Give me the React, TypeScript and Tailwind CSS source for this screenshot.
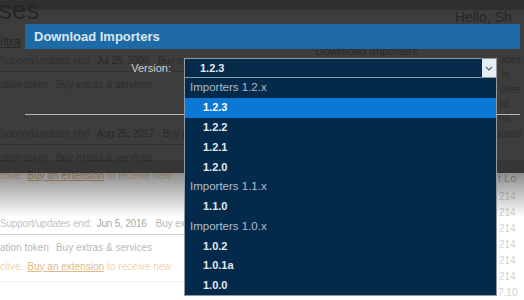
import React from 'react';

type Opt = { label: string; group?: boolean; selected?: boolean };

const OPTIONS: Opt[] = [
  { label: 'Importers 1.2.x', group: true },
  { label: '1.2.3', selected: true },
  { label: '1.2.2' },
  { label: '1.2.1' },
  { label: '1.2.0' },
  { label: 'Importers 1.1.x', group: true },
  { label: '1.1.0' },
  { label: 'Importers 1.0.x', group: true },
  { label: '1.0.2' },
  { label: '1.0.1a' },
  { label: '1.0.0' },
];

function SupportRow({ date, h }: { date: string; h: string }) {
  return (
    <div className={`${h} flex items-center whitespace-nowrap border-b border-[#cfcfcf] tracking-[-0.2px]`}>
      <span className="text-[#c4c4c4]">Support/updates end:</span>
      <span className="ml-[5px] text-[#a9a9a9]">{date}</span>
      <span className="ml-[9px] text-[#b9b9b9]">Buy ext</span>
    </div>
  );
}

function TokenRow({ h }: { h: string }) {
  return (
    <div className={`${h} flex items-center whitespace-nowrap text-[#b9b9b9]`}>
      <span>ation token</span>
      <span className="ml-[7px]">Buy extras &amp; services</span>
    </div>
  );
}

function ExpiredRow() {
  return (
    <div className="h-[12px] flex items-center whitespace-nowrap text-[#f1d6b4]">
      <span>ctive.</span>
      <span className="ml-[4px] text-[#e2b883] underline">Buy an extension</span>
      <span className="ml-[3px]">to receive new</span>
    </div>
  );
}

function Page() {
  return (
    <div className="flex h-[300px] bg-[linear-gradient(to_bottom,#c6c6c6_10px,#ffffff_10px)] text-[10px]">
      {/* main column, its right part lies under the select */}
      <div className="w-[184px] shrink-0 overflow-hidden flex flex-col">
        <div className="h-[24px]">
          <div className="-mt-[3px] -ml-[1px] text-[26px] leading-[26px] text-[#9a9a9a]">ses</div>
        </div>
        <div className="h-[26px] flex items-end pb-[1px]">
          <span className="text-[13px] leading-[14px] text-[#a5a5a5] underline">iltra</span>
        </div>
        <SupportRow date="Jul 25, 2009" h="h-[22px]" />
        <TokenRow h="h-[24px]" />
        <div className="h-[26px]" />
        <SupportRow date="Aug 25, 2017" h="h-[23px]" />
        <TokenRow h="h-[24px]" />
        <ExpiredRow />
        <div className="h-[31px]" />
        <SupportRow date="Jun 5, 2016" h="h-[23px]" />
        <TokenRow h="h-[25px]" />
        <ExpiredRow />
        <div className="h-[10px] border-b border-[#f3f3f3]" />
      </div>

      {/* middle column */}
      <div className="w-[314px] shrink-0 flex flex-col">
        <div className="h-[24px] pl-[271px] pt-[9px] whitespace-nowrap text-[14px] leading-[16px] text-[#9c9c9c]">
          Hello, Sh
        </div>
        <div className="h-[21px]" />
        <div className="pl-[131px] h-[12px] text-[11.5px] leading-[12px] whitespace-nowrap text-[#a8a8a8]">
          Download Importers
        </div>
      </div>

      {/* right column */}
      <div className="w-[26px] shrink-0 flex flex-col whitespace-nowrap text-[#b2b2b2]">
        <div className="h-[52px]" />
        <div className="h-[15px] flex items-center pl-[2px]">ases</div>
        <div className="h-[15px] flex items-center pl-[4px]">le</div>
        <div className="h-[15px] flex items-center pl-[2px]">ches</div>
        <div className="h-[15px] flex items-center pl-[2px]">rd</div>
        <div className="h-[12px] flex items-center pl-[1px]">ns</div>
        <div className="h-[20px] flex items-center">icens</div>
        <div className="h-[27px]" />
        <div className="h-[16px] flex items-center text-[11px] text-[#bdbdbd]">t Lo</div>
        <div className="h-[3px]" />
        {['214', '214', '214', '214', '214', '214'].map((n, i) => (
          <div key={i} className="h-[16px] flex items-center pl-[1px] text-[#d2d2d2]">
            {n}
          </div>
        ))}
        <div className="h-[16px] flex items-center text-[#d2d2d2]">7.10</div>
      </div>
    </div>
  );
}

function VersionSelect() {
  return (
    <div className="relative w-[313px]">
      <div className="h-[20px] flex items-center border border-[#8f9aa5] bg-[#052a4a]">
        <span className="flex-1 pl-[15px] text-[11px] font-bold text-[#e4ebf2]">1.2.3</span>
        <span className="w-[14px] h-[18px] flex items-center justify-center bg-[#e6edf3]">
          <svg width="8" height="5" viewBox="0 0 8 5" fill="none">
            <path d="M1 1l3 3 3-3" stroke="#5b6571" strokeWidth="1.2" />
          </svg>
        </span>
      </div>

      {/* open list */}
      <div className="absolute top-[19px] left-0 w-[313px] border border-[#8f9aa5] bg-[#042a4b]">
        {OPTIONS.map((o, i) =>
          o.group ? (
            <div key={i} className="h-[19.75px] flex items-center pl-[5px] text-[11.5px] text-[#aebfcd]">
              {o.label}
            </div>
          ) : (
            <div
              key={i}
              className={`h-[19.75px] flex items-center pl-[18px] text-[11px] font-bold ${
                o.selected ? 'bg-[#0a78d4] text-white' : 'text-[#e3eaf1]'
              }`}
            >
              {o.label}
            </div>
          )
        )}
      </div>
    </div>
  );
}

export default function App() {
  return (
    <div className="relative w-[524px] h-[300px] overflow-hidden bg-white font-['Liberation_Sans',Arial,sans-serif]">
      <Page />

      {/* dim overlay */}
      <div className="absolute left-0 top-0 w-full h-[173px] bg-[linear-gradient(to_bottom,rgba(0,0,0,0.76)_160px,rgba(0,0,0,0.79)_160px)]" />
      <div className="absolute left-0 top-[173px] w-full h-[44px] bg-linear-to-b from-black/45 to-transparent" />

      {/* dialog */}
      <div className="absolute left-[25px] top-[24px] w-[495px]">
        <div className="h-[25px] flex items-center pl-[9px] bg-[#1e6aa6] text-[13px] font-bold text-[#dbe7f1]">
          Download Importers
        </div>
        <div className="flex items-start pt-[9px]">
          <div className="w-[159px] h-[20px] flex items-center justify-end pr-[13px] text-[11px] text-[#cfcfcf]">
            Version:
          </div>
          <VersionSelect />
        </div>
        <div className="mt-[36px] border-t border-[#b8b8b8]" />
      </div>
    </div>
  );
}
